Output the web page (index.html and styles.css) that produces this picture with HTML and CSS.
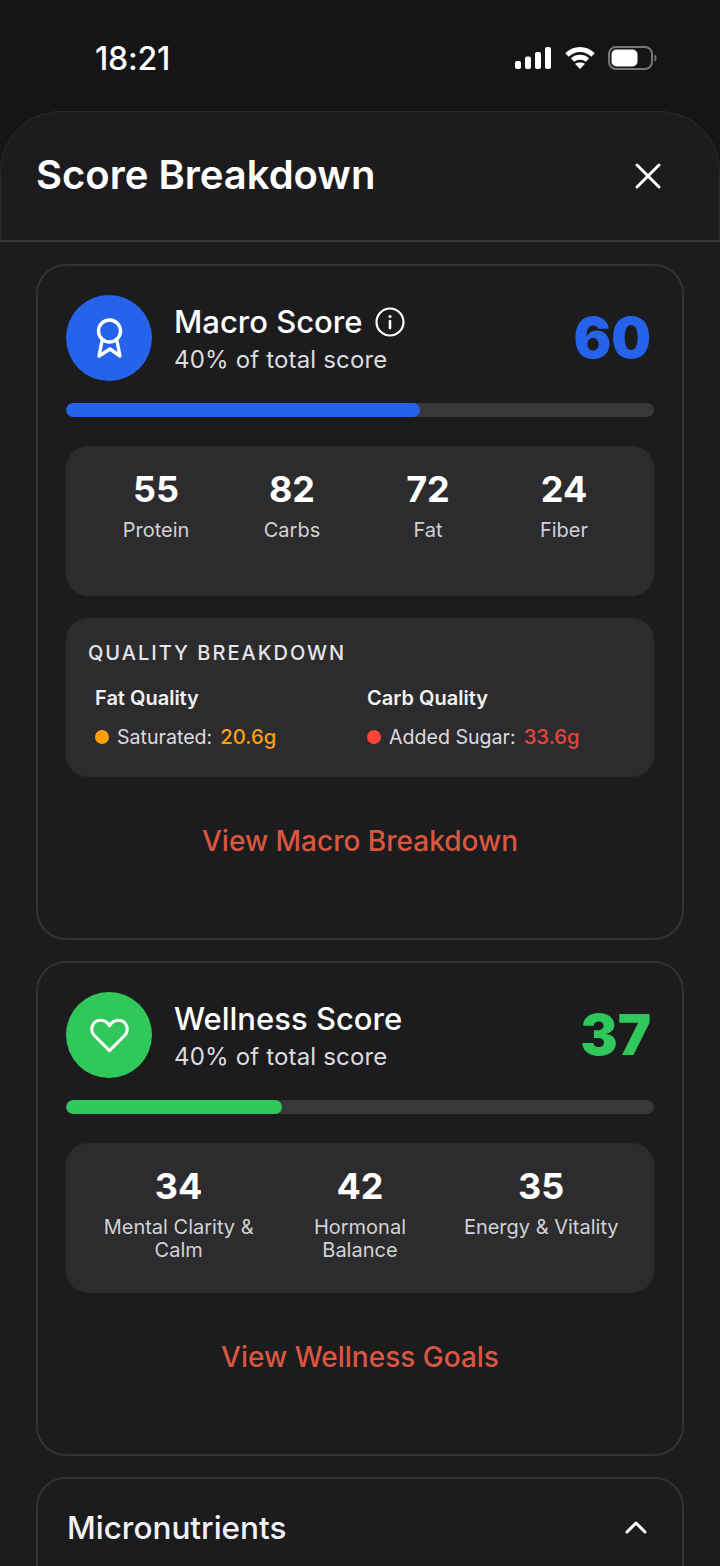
FILE: index.html
```html
<!DOCTYPE html>
<html lang="en">
<head>
<meta charset="utf-8">
<title>Score Breakdown</title>
<link rel="stylesheet" href="styles.css">
</head>
<body>
<div class="status">
  <span class="time">18:21</span>
  <div class="status-icons">
    <svg class="signal" width="36" height="22" viewBox="0 0 36 22"><rect x="0" y="14" width="6" height="8" rx="2"/><rect x="10" y="9.500" width="6" height="12.500" rx="2"/><rect x="20" y="5" width="6" height="17" rx="2"/><rect x="30" y="0" width="6" height="22" rx="2"/></svg>
    <svg class="wifi" width="30" height="22" viewBox="0 0 30 22"><path d="M2 8C9.500 .8 20.500 .8 28 8" /><path d="M7.500 13C11.800 9.200 18.200 9.200 22.500 13"/><path class="wifi-dot" d="M15 22l-5-5.200c3-1.900 7-1.900 10 0z"/></svg>
    <svg class="battery" width="49" height="24" viewBox="0 0 49 24"><rect class="bat-shell" x="1" y="1" width="43" height="22" rx="7"/><rect class="bat-fill" x="3.500" y="3.500" width="26" height="17" rx="5"/><path class="bat-cap" d="M46.500 8.500c1.500.6 2 2 2 3.500s-.5 2.900-2 3.500z"/></svg>
  </div>
</div>
<main class="sheet">
  <header class="sheet-head">
    <h1>Score Breakdown</h1>
    <svg class="close" width="28" height="28" viewBox="0 0 28 28"><path d="M3 3l22 22M25 3L3 25"/></svg>
  </header>
  <div class="content">
    <section class="card card-macro">
      <div class="score-head">
        <div class="badge badge-blue">
          <svg width="40" height="46" viewBox="0 0 40 46"><circle cx="20.500" cy="16" r="11"/><path d="M13 26l-3 15 11-7 10 7-3-15"/></svg>
        </div>
        <div class="score-text">
          <div class="title-row"><h2>Macro Score</h2>
            <svg class="info" width="30" height="30" viewBox="0 0 30 30"><circle cx="15" cy="15" r="13.500"/><path d="M15 14v7"/><circle class="info-dot" cx="15" cy="9.500" r="1.600"/></svg>
          </div>
          <p>40% of total score</p>
        </div>
        <div class="score score-blue">60</div>
      </div>
      <div class="bar"><div class="fill fill-blue" style="width:60.2%"></div></div>
      <div class="stats stats-four">
        <div class="stat"><b>55</b><span>Protein</span></div>
        <div class="stat"><b>82</b><span>Carbs</span></div>
        <div class="stat"><b>72</b><span>Fat</span></div>
        <div class="stat"><b>24</b><span>Fiber</span></div>
      </div>
      <div class="quality">
        <h3>QUALITY BREAKDOWN</h3>
        <div class="quality-cols">
          <div class="quality-col">
            <h4>Fat Quality</h4>
            <div class="quality-row"><i class="dot dot-orange"></i><span>Saturated:</span><em class="orange">20.6g</em></div>
          </div>
          <div class="quality-col">
            <h4>Carb Quality</h4>
            <div class="quality-row"><i class="dot dot-red"></i><span>Added Sugar:</span><em class="red">33.6g</em></div>
          </div>
        </div>
      </div>
      <a class="view view-macro">View Macro Breakdown</a>
    </section>
    <section class="card card-well">
      <div class="score-head">
        <div class="badge badge-green">
          <svg width="39" height="35" viewBox="0 0 42 38"><path d="M21 35.500L4.500 19C-1 13 2.500 2.500 11 2.500c4.500 0 8 2.200 10 6 2-3.800 5.500-6 10-6 8.500 0 12 10.500 6.500 16.500z"/></svg>
        </div>
        <div class="score-text">
          <div class="title-row"><h2>Wellness Score</h2></div>
          <p>40% of total score</p>
        </div>
        <div class="score score-green">37</div>
      </div>
      <div class="bar"><div class="fill fill-green" style="width:36.8%"></div></div>
      <div class="stats stats-three">
        <div class="stat"><b>34</b><span>Mental Clarity &amp; Calm</span></div>
        <div class="stat"><b>42</b><span>Hormonal Balance</span></div>
        <div class="stat"><b>35</b><span>Energy &amp; Vitality</span></div>
      </div>
      <a class="view view-well">View Wellness Goals</a>
    </section>
    <section class="card card-micro">
      <div class="micro-head">
        <h2>Micronutrients</h2>
        <svg class="chev" width="24" height="14" viewBox="0 0 24 14"><path d="M3 12L12 3l9 9"/></svg>
      </div>
    </section>
  </div>
</main>
</body>
</html>
```
FILE: styles.css
```css
* { box-sizing: border-box; }
html, body { margin: 0; height: 1566px; overflow: hidden; }
body {
  background: #151517;
  color: #fff;
  font-family: Inter, "Liberation Sans", sans-serif;
  width: 720px;
}
.status {
  height: 111px;
  display: flex;
  justify-content: space-between;
  align-items: flex-start;
  padding: 42px 63px 0 95px;
}
.time { font-size: 32px; font-weight: 500; line-height: 34px; letter-spacing: -0.2px; }
.status-icons { display: flex; align-items: center; gap: 13px; padding-top: 4px; }
.signal { fill: #fff; margin-right: 1px; }
.wifi path { fill: none; stroke: #fff; stroke-width: 5; }
.wifi .wifi-dot { fill: #fff; stroke: none; }
.bat-shell { fill: none; stroke: #77777a; stroke-width: 2; }
.bat-fill { fill: #fff; }
.bat-cap { fill: #77777a; }
.sheet {
  background: #1c1c1e;
  border-radius: 60px 60px 0 0;
  height: 1455px;
  overflow: hidden;
}
.sheet-head {
  height: 131px;
  border: 1px solid #2a2a2c;
  border-bottom: 2px solid #38383a;
  border-radius: 60px 60px 0 0;
  display: flex;
  align-items: center;
  justify-content: space-between;
  padding: 0 57px 0 35px;
}
.sheet-head h1 { margin: 0 0 4px; font-size: 40px; font-weight: 600; }
.close path { stroke: #fff; stroke-width: 3; stroke-linecap: round; fill: none; }
.content { padding: 22px 36px 0; display: flex; flex-direction: column; gap: 21px; }
.card {
  border: 2px solid #333336;
  border-radius: 30px;
  padding: 29px 28px;
}
.card-macro { height: 676px; }
.card-well { height: 495px; }
.card-micro { height: 200px; padding-top: 0; }
.score-head { display: flex; align-items: center; height: 86px; }
.badge {
  width: 86px; height: 86px; border-radius: 50%;
  display: flex; align-items: center; justify-content: center;
  flex: none;
}
.badge svg { fill: none; stroke: #fff; stroke-width: 3.400; stroke-linejoin: round; stroke-linecap: round; }
.badge-blue { background: #2563eb; }
.badge-green { background: #30c85a; }
.score-text { flex: 1; margin-left: 22px; padding-top: 2px; }
.title-row { display: flex; align-items: center; gap: 13px; height: 38px; }
.score-text h2 { margin: 0; font-size: 31px; font-weight: 500; line-height: 38px; }
.info circle { fill: none; stroke: #fff; stroke-width: 2.200; }
.info path { stroke: #fff; stroke-width: 2.600; stroke-linecap: round; }
.info .info-dot { fill: #fff; stroke: none; }
.score-text p { margin: 4px 0 0; font-size: 24px; line-height: 30px; letter-spacing: 0.17px; color: #dcdce0; }
.score { font-size: 56px; font-weight: 900; line-height: 60px; padding-right: 3px; }
.score-blue { color: #2563eb; }
.score-green { color: #30c85a; }
.bar { height: 14px; background: #38383a; border-radius: 7px; margin-top: 22px; overflow: hidden; }
.fill { height: 100%; border-radius: 7px; }
.fill-blue { background: #2563eb; }
.fill-green { background: #30c85a; }
.stats {
  height: 150px;
  margin-top: 29px;
  background: #2c2c2e;
  border-radius: 22px;
  padding: 20px 22px;
  display: grid;
}
.stats-four { grid-template-columns: repeat(4, 136px); padding: 20px 22px; }
.stats-three { grid-template-columns: repeat(3, 181.300px); padding: 20px 22px; }
.stat { display: flex; flex-direction: column; align-items: center; text-align: center; padding: 0 8px; }
.stat b { font-size: 36px; font-weight: 700; line-height: 46px; }
.stat span { font-size: 20px; line-height: 23px; color: #d2d2d6; margin-top: 7px; }
.quality {
  margin-top: 22px;
  height: 159px;
  background: #2c2c2e;
  border-radius: 22px;
  padding: 22px;
}
.quality h3 { margin: 0; font-size: 20px; font-weight: 500; line-height: 26px; letter-spacing: 2px; color: #e5e5ea; }
.quality-cols { display: grid; grid-template-columns: 272px 1fr; padding: 0 7px; margin-top: 20px; }
.quality h4 { margin: 0; font-size: 20px; font-weight: 600; line-height: 24px; color: #f2f2f4; }
.quality-row { display: flex; align-items: center; margin-top: 15px; font-size: 19.600px; line-height: 24px; color: #dcdce0; }
.dot { width: 14px; height: 14px; border-radius: 50%; margin-right: 8px; flex: none; }
.dot-orange { background: #ff9f0a; }
.dot-red { background: #ff453a; }
.quality-row em { font-style: normal; font-weight: 500; font-size: 20.300px; margin-left: 8px; }
.orange { color: #ff9f0a; }
.red { color: #e5453c; }
.view {
  display: block;
  text-align: center;
  font-size: 28px;
  font-weight: 500;
  line-height: 34px;
  color: #d9573f;
}
.view-macro { margin-top: 47px; }
.view-well { margin-top: 47px; }
.micro-head { display: flex; justify-content: space-between; align-items: center; height: 96px; padding: 0 6px 0 1px; }
.micro-head h2 { margin: 0; font-size: 31.500px; font-weight: 500; color: #f2f2f7; }
.chev path { fill: none; stroke: #fff; stroke-width: 3; stroke-linecap: round; stroke-linejoin: round; }
```
